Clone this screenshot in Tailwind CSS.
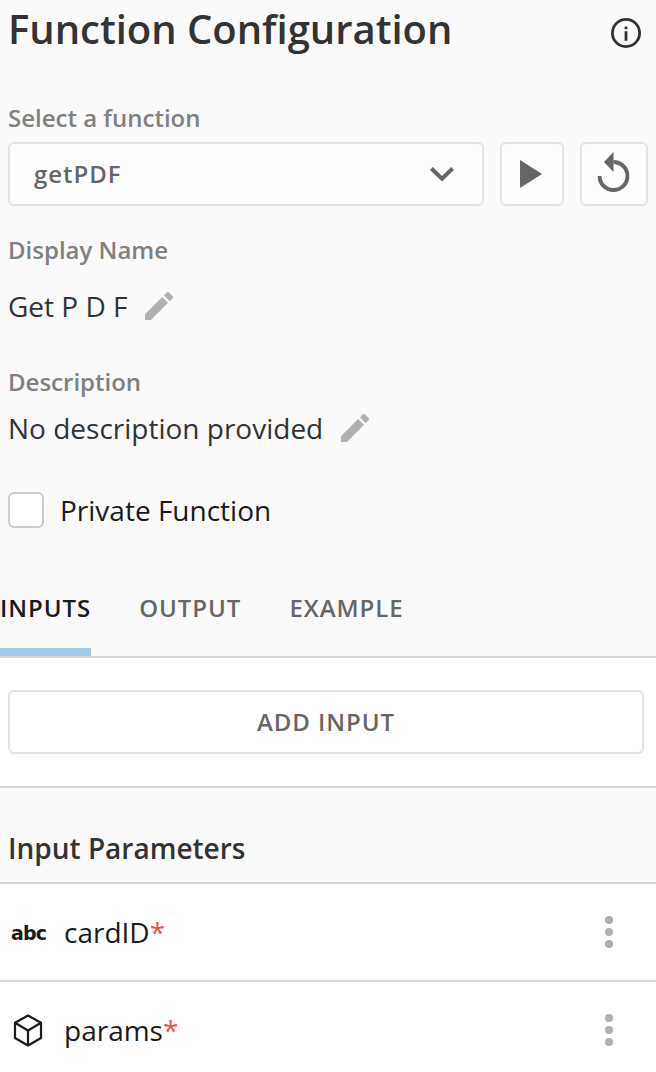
<!DOCTYPE html>
<html lang="en">
<head>
  <meta charset="UTF-8" />
  <meta name="viewport" content="width=device-width, initial-scale=1" />
  <title>Function Configuration</title>
  <script src="https://cdn.jsdelivr.net/npm/@tailwindcss/browser@4"></script>
</head>
<body class="h-[1072px] overflow-hidden bg-[#fafafa] font-['Open_Sans',sans-serif] text-[28px] text-[#333]">

  <header class="flex h-[56px] justify-between pl-2 pr-[15px]">
    <h1 class="text-[40px] font-semibold leading-[57px] tracking-[-0.020px]">Function Configuration</h1>
    <svg class="mt-[18px] size-[30px]" viewBox="0 0 30 30" fill="none" stroke="#333">
      <circle cx="15" cy="15" r="13.6" stroke-width="2.8" />
      <path d="M15 13.3v9.4M15 8.5v2.8" stroke-width="2.8" />
    </svg>
  </header>

  <section class="px-2 pt-11">
    <label class="block h-[42px] text-2xl font-semibold leading-9 text-[#808080]">Select a function</label>
    <div class="flex gap-4">
      <div class="flex h-16 w-[476px] items-center justify-between rounded-md border-2 border-[#e3e3e3] bg-[#fdfdfd] pl-6 pr-[27px] text-2xl font-semibold tracking-[0.960px] text-[#666]">
        <span>getPDF</span>
        <svg class="h-[16px] w-[26px]" viewBox="0 0 26 16" fill="none" stroke="#666" stroke-width="4">
          <path d="M2.4 2.5 13 12.7 23.6 2.5" />
        </svg>
      </div>
      <button class="flex h-16 w-16 items-center justify-center rounded-md border-2 border-[#e3e3e3] bg-[#fdfdfd]">
        <svg class="h-7 w-[22px] -translate-x-[1px]" viewBox="0 0 22 28" fill="#666"><path d="M0 0v28l22-14z" /></svg>
      </button>
      <button class="flex h-16 w-[68px] items-center justify-center rounded-md border-2 border-[#e3e3e3] bg-[#fdfdfd]">
        <svg class="h-[40px] w-[32px] -translate-x-[0.500px] -translate-y-[2px]" viewBox="0 0 32 40">
          <path d="M2 24a14 14 0 1 0 14-14" fill="none" stroke="#666" stroke-width="4" />
          <path d="M16 0v20L6.500 10z" fill="#666" />
        </svg>
      </button>
    </div>

    <label class="mt-[26px] block text-2xl font-semibold leading-9 text-[#808080]">Display Name</label>
    <div class="mt-[18px] flex h-10 items-center gap-[17px]">
      <span>Get P D F</span>
      <svg class="size-7" viewBox="3 3 18 18" fill="#b0b0b0">
        <path d="M3 17.250V21h3.750L17.810 9.940l-3.750-3.750L3 17.250z" />
        <path d="M20.710 7.040a1 1 0 0 0 0-1.410l-2.340-2.340a1 1 0 0 0-1.410 0l-1.830 1.830 3.750 3.750 1.830-1.830z" />
      </svg>
    </div>

    <label class="mt-[38px] block text-2xl font-semibold leading-9 text-[#808080]">Description</label>
    <div class="mt-[8px] flex h-10 items-center gap-[18px]">
      <span>No description provided</span>
      <svg class="size-7" viewBox="3 3 18 18" fill="#b0b0b0">
        <path d="M3 17.250V21h3.750L17.810 9.940l-3.750-3.750L3 17.250z" />
        <path d="M20.710 7.040a1 1 0 0 0 0-1.410l-2.340-2.340a1 1 0 0 0-1.410 0l-1.830 1.830 3.750 3.750 1.830-1.830z" />
      </svg>
    </div>

    <div class="mt-[44px] flex h-9 items-center gap-4 text-[#1a1a1a]">
      <span class="size-9 rounded-md border-2 border-[#ccc] bg-white"></span>
      <span>Private Function</span>
    </div>
  </section>

  <nav class="mt-[56px] flex h-[74px] gap-12 border-b-2 border-[#d6d6d6] text-2xl font-semibold leading-[48px] tracking-[0.960px] text-[#666]">
    <span class="border-b-8 border-[#a3c9ea] text-[#1a1a1a]">INPUTS</span>
    <span>OUTPUT</span>
    <span>EXAMPLE</span>
  </nav>

  <div class="h-[130px] border-b-2 border-[#d6d6d6] bg-white py-8 pl-2 pr-3">
    <button class="h-16 w-full rounded-md border-2 border-[#e3e3e3] bg-white text-2xl font-semibold tracking-[0.960px] text-[#666]">ADD INPUT</button>
  </div>

  <h2 class="h-24 border-b-2 border-[#d6d6d6] pl-2 pt-10 font-semibold leading-10">Input Parameters</h2>

  <div class="flex h-[98px] items-center border-b-2 border-[#d6d6d6] bg-white pl-2 pr-[43px] text-[#1a1a1a]">
    <span class="w-10 pl-[3px] pt-px font-['DejaVu_Sans',sans-serif] text-[19px] font-bold leading-8 tracking-[-0.800px]">abc</span>
    <span class="ml-4">cardID<span class="text-[#d9594c]">*</span></span>
    <svg class="ml-auto h-8 w-2" viewBox="0 0 8 32" fill="#b0b0b0">
      <circle cx="4" cy="4" r="4" /><circle cx="4" cy="16" r="4" /><circle cx="4" cy="28" r="4" />
    </svg>
  </div>

  <div class="flex h-24 items-center bg-white pl-2 pr-[43px] text-[#1a1a1a]">
    <svg class="size-10" viewBox="0 0 40 40" fill="none" stroke="#1a1a1a" stroke-width="2.200" stroke-linejoin="round">
      <path d="M20 5.500 33 12.800V28L20 35.500 7 28V12.800zM7 12.800 20 20.500l13-7.700M20 20.500v15" />
    </svg>
    <span class="ml-4">params<span class="text-[#d9594c]">*</span></span>
    <svg class="ml-auto h-8 w-2" viewBox="0 0 8 32" fill="#b0b0b0">
      <circle cx="4" cy="4" r="4" /><circle cx="4" cy="16" r="4" /><circle cx="4" cy="28" r="4" />
    </svg>
  </div>

</body>
</html>
